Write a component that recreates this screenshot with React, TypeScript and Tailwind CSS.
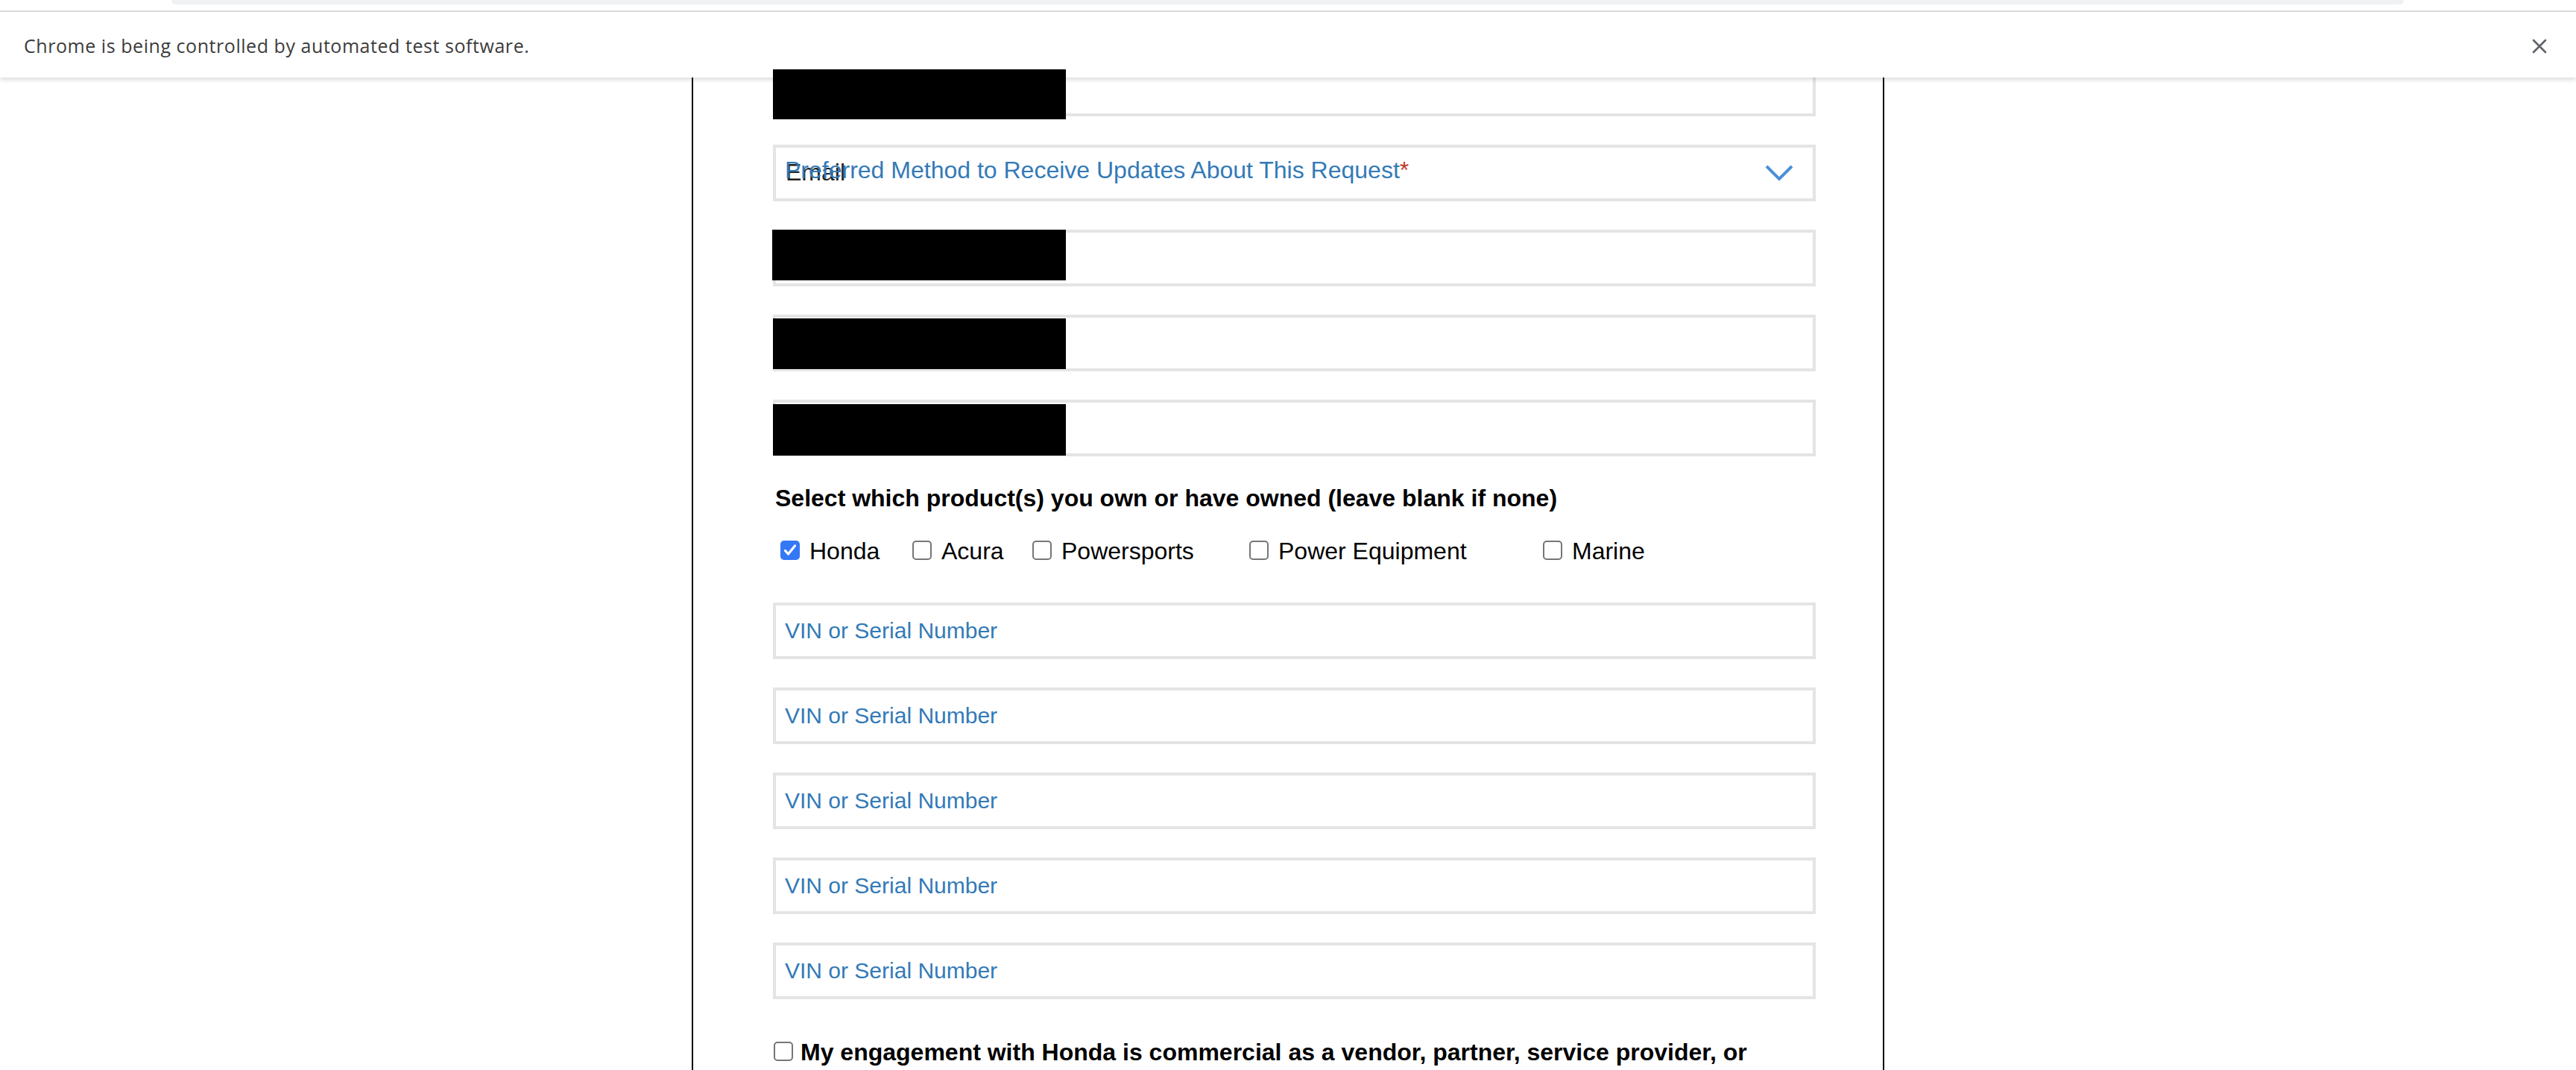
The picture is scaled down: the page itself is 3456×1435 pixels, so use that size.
import React from "react";

const FONT = { fontFamily: '"Liberation Sans", Arial, Helvetica, sans-serif' };

function Box({ checked }: { checked?: boolean }) {
  if (checked) {
    return (
      <span className="flex h-[26px] w-[26px] shrink-0 items-center justify-center rounded-[5px] bg-[#3478f6]">
        <svg viewBox="0 0 26 26" className="h-[26px] w-[26px]">
          <path d="M6.5 13.5 L10.5 18 L19.5 7" stroke="white" strokeWidth="3.2" fill="none" strokeLinecap="round" strokeLinejoin="round" />
        </svg>
      </span>
    );
  }
  return <span className="block h-[26px] w-[26px] shrink-0 rounded-[5px] border-2 border-[#767676] bg-white" />;
}

function Redact({ cls }: { cls: string }) {
  return <div className={"absolute z-20 bg-black " + cls} />;
}

function VinInput() {
  return (
    <div className="flex h-[76px] w-[1399px] items-center border-4 border-[#e4e4e4] bg-white pl-[12px]">
      <span className="text-[30px] leading-[36px] text-[#337ab7]">VIN or Serial Number</span>
    </div>
  );
}

const products: { label: string; w: string; checked?: boolean }[] = [
  { label: "Honda", w: "w-[177px]", checked: true },
  { label: "Acura", w: "w-[161px]" },
  { label: "Powersports", w: "w-[291px]" },
  { label: "Power Equipment", w: "w-[394px]" },
  { label: "Marine", w: "w-[200px]" },
];

export default function App() {
  return (
    <div className="relative h-[1435px] w-full overflow-hidden bg-white" style={FONT}>
      {/* Chrome top chrome + infobar (overlay) */}
      <div className="absolute left-0 top-0 z-10 w-full">
        <div className="relative h-[14px] w-full bg-white">
          <div className="absolute left-[230px] top-0 h-[6px] w-[2995px] rounded-b-[10px] bg-[#eff1f3]" />
        </div>
        <div className="h-[2px] w-full bg-[#dcdcdc]" />
        <div className="flex h-[88px] w-full items-center justify-between bg-white pl-[32px] pr-[39px] pt-[3px] shadow-[0_3px_6px_rgba(0,0,0,0.14)]">
          <span
            className="text-[25px] tracking-[0.55px] text-[#3c3c3c]"
            style={{ fontFamily: '"Open Sans", "Liberation Sans", sans-serif' }}
          >
            Chrome is being controlled by automated test software.
          </span>
          <svg viewBox="0 0 20 20" className="h-[20px] w-[20px]">
            <path d="M2 2 L18 18 M18 2 L2 18" stroke="#5f6368" strokeWidth="2.6" strokeLinecap="round" />
          </svg>
        </div>
      </div>

      {/* Page */}
      <div className="flex h-full w-full justify-center">
        <div className="flex h-full w-[1600px] flex-col border-x-2 border-black pl-[107px] pt-[80px]">
          {/* Input 1 */}
          <div className="relative h-[76px] w-[1399px] border-4 border-[#e4e4e4] bg-white">
            <Redact cls="left-[-4px] top-[9px] h-[67px] w-[393px]" />
          </div>

          {/* Select */}
          <div className="mt-[38px] flex h-[76px] w-[1399px] items-start justify-between border-4 border-[#e4e4e4] bg-white pl-[12px] pr-[26px]">
            <div className="relative mt-[10px] text-[32px] leading-[40px]">
              <span className="absolute left-[1px] top-[3px] text-[#222222]">Email</span>
              <span className="relative text-[#337ab7]">
                Preferred Method to Receive Updates About This Request
                <span className="text-[#c0392b]">*</span>
              </span>
            </div>
            <svg viewBox="0 0 38 22" className="mt-[23px] h-[22px] w-[38px]">
              <path d="M2 2 L19 19 L36 2" stroke="#4a90d9" strokeWidth="4" fill="none" />
            </svg>
          </div>

          {/* Inputs 2-4 */}
          <div className="relative mt-[38px] h-[76px] w-[1399px] border-4 border-[#e4e4e4] bg-white">
            <Redact cls="left-[-5px] top-[-4px] h-[68px] w-[394px]" />
          </div>
          <div className="relative mt-[38px] h-[76px] w-[1399px] border-4 border-[#e4e4e4] bg-white">
            <Redact cls="left-[-4px] top-[1px] h-[68px] w-[393px]" />
          </div>
          <div className="relative mt-[38px] h-[76px] w-[1399px] border-4 border-[#e4e4e4] bg-white">
            <Redact cls="left-[-4px] top-[2px] h-[69px] w-[393px]" />
          </div>

          {/* Heading */}
          <div className="mt-[36px] pl-[3px] text-[32px] font-bold leading-[40px] text-black">
            Select which product(s) you own or have owned (leave blank if none)
          </div>

          {/* Checkbox row */}
          <div className="mt-[31px] flex pl-[10px]">
            {products.map((p) => (
              <div key={p.label} className={"flex items-start gap-[13px] " + p.w}>
                <span className="mt-[6px] block">
                  <Box checked={p.checked} />
                </span>
                <span className="whitespace-nowrap text-[32px] leading-[40px] text-black">{p.label}</span>
              </div>
            ))}
          </div>

          {/* VIN inputs */}
          <div className="mt-[49px] flex flex-col gap-[38px]">
            <VinInput />
            <VinInput />
            <VinInput />
            <VinInput />
            <VinInput />
          </div>

          {/* Commercial checkbox */}
          <div className="mt-[51px] flex items-start gap-[10px] pl-[1px]">
            <span className="mt-[6px] block">
              <Box />
            </span>
            <span className="whitespace-nowrap text-[32px] font-bold leading-[40px] text-black">
              My engagement with Honda is commercial as a vendor, partner, service provider, or
            </span>
          </div>
        </div>
      </div>
    </div>
  );
}
